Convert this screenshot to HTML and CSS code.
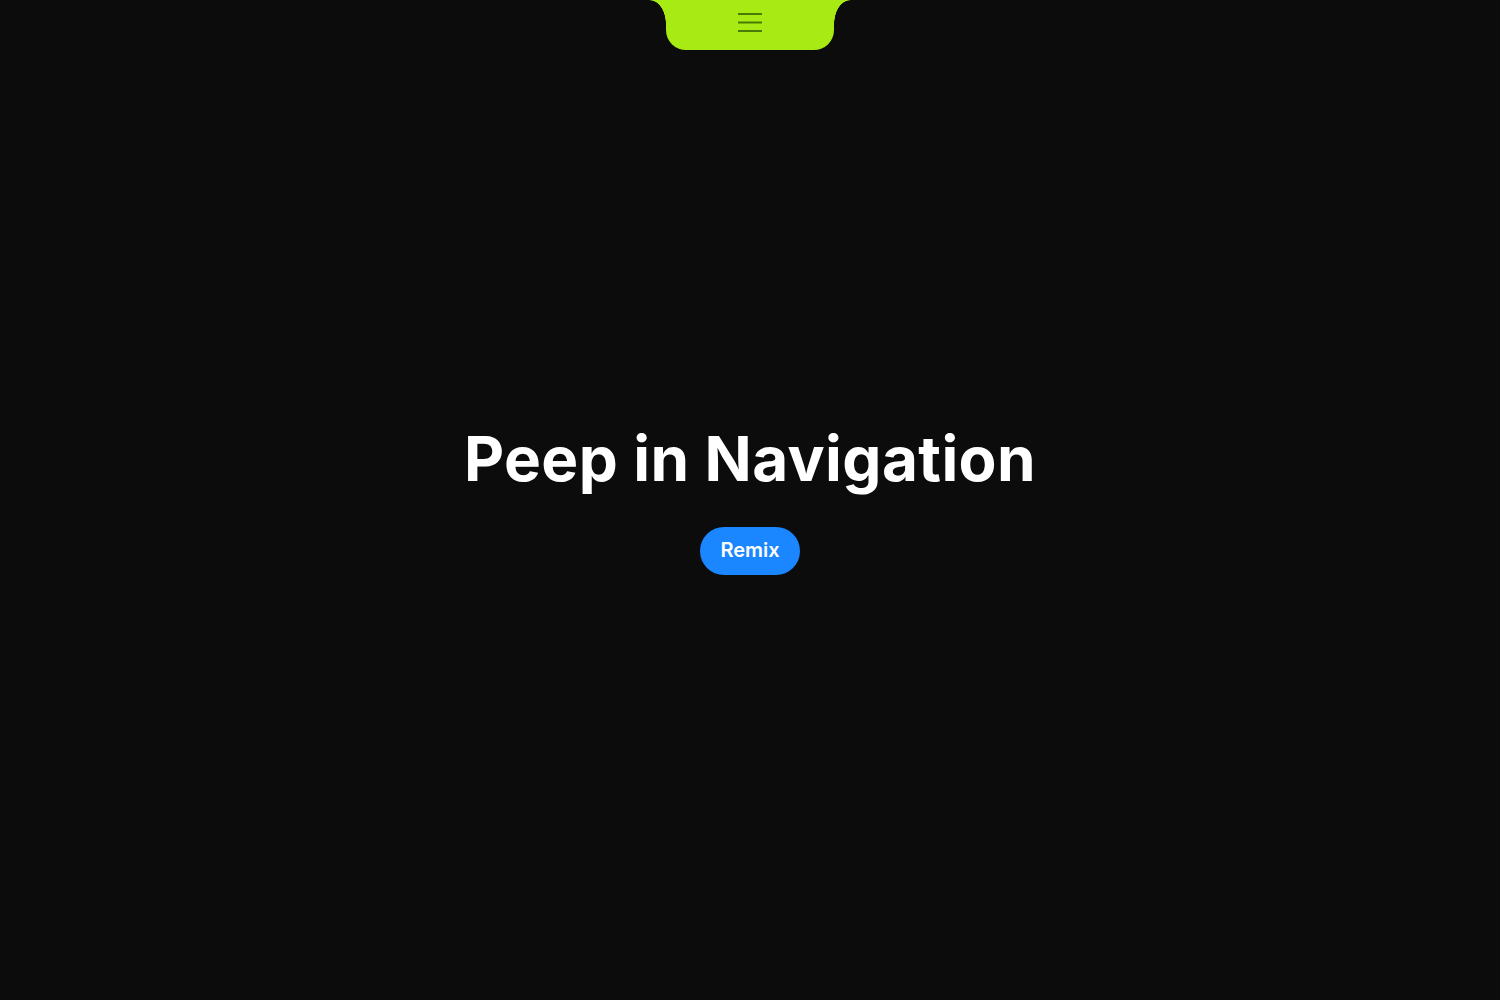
FILE: index.html
```html
<!DOCTYPE html>
<html lang="en">
<head>
<meta charset="utf-8">
<title>Peep in Navigation</title>
<link rel="stylesheet" href="styles.css">
</head>
<body>
<header class="notch-bar">
  <nav class="notch">
    <button class="menu-btn" aria-label="Menu">
      <svg width="24" height="20" viewBox="0 0 24 20"><path d="M0 1h24M0 9.5h24M0 18h24" stroke="#4a7a06" stroke-width="2"/></svg>
    </button>
  </nav>
</header>
<main class="hero">
  <h1 class="title">Peep in Navigation</h1>
  <a class="remix" href="#">Remix</a>
</main>
</body>
</html>
```

FILE: styles.css
```css
html, body {
  margin: 0;
  padding: 0;
  background: #0c0c0c;
  height: 100%;
  font-family: Inter, "Liberation Sans", sans-serif;
}
.notch-bar {
  position: fixed;
  top: 0;
  left: 0;
  right: 0;
  display: flex;
  justify-content: center;
}
.notch {
  position: relative;
  width: 168px;
  height: 50px;
  background: #a8ea13;
  border-radius: 0 0 20px 20px;
  display: flex;
  align-items: flex-start;
  justify-content: center;
}
.notch::before,
.notch::after {
  content: "";
  position: absolute;
  top: 0;
  width: 16px;
  height: 24px;
}
.notch::before {
  left: -16px;
  background: radial-gradient(ellipse 16px 24px at 0 100%, transparent 97%, #a8ea13 100%);
}
.notch::after {
  right: -16px;
  background: radial-gradient(ellipse 16px 24px at 100% 100%, transparent 97%, #a8ea13 100%);
}
.menu-btn {
  background: none;
  border: 0;
  padding: 0;
  margin-top: 13px;
  display: block;
  cursor: pointer;
}
.menu-btn svg { display: block; }
.hero {
  height: 100vh;
  display: flex;
  flex-direction: column;
  align-items: center;
  justify-content: center;
  gap: 36px;
  padding-top: 2px;
  box-sizing: border-box;
}
.title {
  margin: 0;
  color: #ffffff;
  font-size: 62px;
  font-weight: 700;
  line-height: 64px;
  letter-spacing: 0.4px;
}
.remix {
  display: inline-flex;
  align-items: center;
  justify-content: center;
  width: 100px;
  height: 48px;
  padding-bottom: 3px;
  box-sizing: border-box;
  border-radius: 24px;
  background: #1a86ff;
  color: #ffffff;
  font-size: 20px;
  font-weight: 600;
  text-decoration: none;
}
```
